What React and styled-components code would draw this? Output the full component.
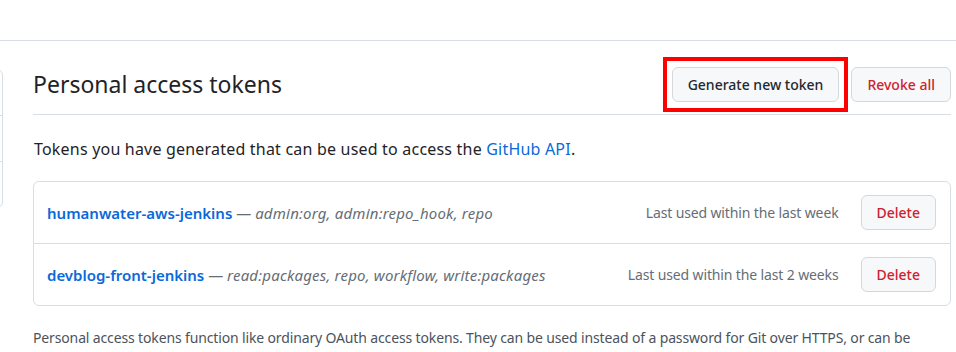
import styled, { createGlobalStyle } from "styled-components";

const GlobalStyle = createGlobalStyle`
  body {
    margin: 0;
    background: #ffffff;
    color: #1f2328;
    font-family: "Noto Sans", "Liberation Sans", sans-serif;
    overflow: hidden;
  }
`;

const tokens = [
  {
    name: "humanwater-aws-jenkins",
    scopes: "admin:org, admin:repo_hook, repo",
    lastUsed: "Last used within the last week",
  },
  {
    name: "devblog-front-jenkins",
    scopes: "read:packages, repo, workflow, write:packages",
    lastUsed: "Last used within the last 2 weeks",
  },
];

const App = () => {
  return (
    <>
      <GlobalStyle />
      <TopBar />
      <Layout>
        <SideNav>
          <SideItem />
          <SideItem />
          <SideItem />
        </SideNav>
        <Main>
          <Subhead>
            <Heading>Personal access tokens</Heading>
            <Actions>
              <Highlight>
                <Button>Generate new token</Button>
              </Highlight>
              <Button danger>Revoke all</Button>
            </Actions>
          </Subhead>
          <Intro>
            Tokens you have generated that can be used to access the{" "}
            <Link href="#">GitHub API</Link>.
          </Intro>
          <TokenList>
            {tokens.map((token) => (
              <TokenRow key={token.name}>
                <TokenInfo>
                  <TokenName href="#">{token.name}</TokenName>
                  <Dash> — </Dash>
                  <Scopes>{token.scopes}</Scopes>
                </TokenInfo>
                <LastUsed>{token.lastUsed}</LastUsed>
                <Button danger>Delete</Button>
              </TokenRow>
            ))}
          </TokenList>
          <Note>
            Personal access tokens function like ordinary OAuth access tokens.
            They can be used instead of a password for Git over HTTPS, or can be
          </Note>
        </Main>
      </Layout>
    </>
  );
};

const TopBar = styled.div`
  height: 40px;
  border-bottom: 1px solid #d8dee4;
`;

const Layout = styled.div`
  display: flex;
  align-items: flex-start;
  padding: 26px 5px 0 0;
`;

const SideNav = styled.nav`
  flex: none;
  width: 200px;
  margin-left: -199px;
  margin-top: 2px;
  border: 1px solid #d8dee4;
  border-radius: 6px;
`;

const SideItem = styled.div`
  height: 45px;
  & + & {
    border-top: 1px solid #d8dee4;
  }
`;

const Main = styled.main`
  flex: 1;
  margin-left: 30px;
  min-width: 0;
`;

const Subhead = styled.div`
  display: flex;
  align-items: center;
  padding-bottom: 12px;
  border-bottom: 1px solid #d8dee4;
`;

const Heading = styled.h2`
  flex: 1;
  margin: 0;
  font-size: 23px;
  font-weight: 400;
  line-height: 35px;
`;

const Actions = styled.div`
  display: flex;
  align-items: center;
  gap: 11px;
`;

const Highlight = styled.div`
  display: flex;
  margin: -10px -8px -10px 0;
  padding: 6px 5px;
  border: 4px solid #ff0000;
`;

const Button = styled.button`
  height: 35px;
  padding: 0 15px;
  font-family: inherit;
  font-size: 14px;
  font-weight: 500;
  color: ${(p) => (p.danger ? "#cf222e" : "#24292f")};
  background: #f6f8fa;
  border: 1px solid #d5d8da;
  border-radius: 6px;
  cursor: pointer;
`;

const Intro = styled.p`
  margin: 22px 0 20px 1px;
  font-size: 16px;
  line-height: 24px;
  letter-spacing: 0.2px;
`;

const Link = styled.a`
  color: #0969da;
  text-decoration: none;
`;

const TokenList = styled.div`
  border: 1px solid #d8dee4;
  border-radius: 6px;
`;

const TokenRow = styled.div`
  display: flex;
  align-items: center;
  height: 61px;
  padding: 0 14px 0 13px;
  & + & {
    border-top: 1px solid #d8dee4;
  }
`;

const TokenInfo = styled.div`
  flex: 1;
  font-size: 15px;
`;

const TokenName = styled.a`
  color: #0969da;
  font-weight: 600;
  text-decoration: none;
`;

const Dash = styled.span`
  color: #656d76;
`;

const Scopes = styled.em`
  color: #656d76;
  letter-spacing: 0.2px;
`;

const LastUsed = styled.span`
  margin-right: 22px;
  font-size: 14px;
  letter-spacing: -0.13px;
  color: #656d76;
`;

const Note = styled.p`
  margin: 21px 0 0;
  font-size: 14px;
  line-height: 21px;
  letter-spacing: -0.14px;
  color: #4b535c;
`;

export default App;
